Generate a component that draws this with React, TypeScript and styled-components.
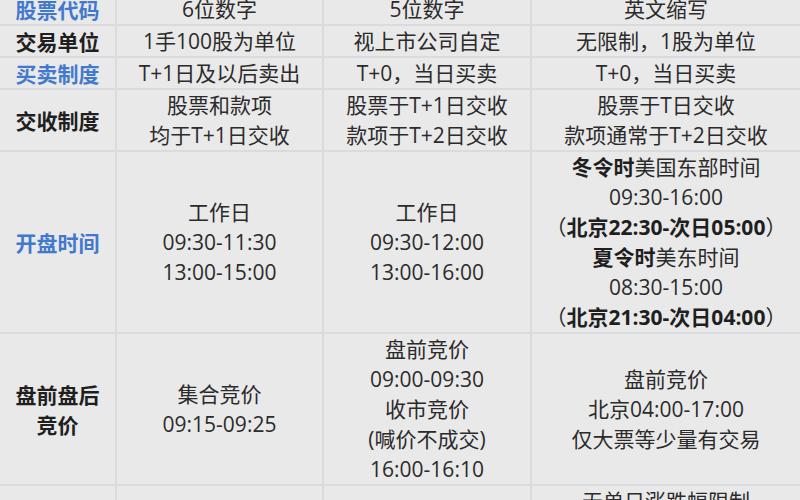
import React from "react";
import styled, { createGlobalStyle } from "styled-components";

const GlobalStyle = createGlobalStyle`
  html, body {
    margin: 0;
    padding: 0;
    background: #e9e9e9;
  }
  * {
    box-sizing: border-box;
  }
`;

const Frame = styled.div`
  width: 800px;
  height: 500px;
  overflow: hidden;
  background: #e9e9e9;
`;

const Table = styled.div`
  margin-top: -6px;
  display: grid;
  grid-template-columns: 115px 205px 206px 1fr;
  gap: 2px;
  background-color: #d9dbdf;
  font-family: "Open Sans", "Noto Sans CJK SC", sans-serif;
  font-size: 21px;
  line-height: 30px;
  color: #2b2b2b;
`;

const Cell = styled.div<{ $top?: boolean }>`
  background-color: #e9e9e9;
  display: flex;
  flex-direction: column;
  align-items: center;
  justify-content: ${(props) => (props.$top ? "flex-start" : "center")};
  text-align: center;
  white-space: nowrap;
`;

const Label = styled(Cell)<{ $blue?: boolean }>`
  font-family: "Noto Sans CJK SC", sans-serif;
  font-weight: 700;
  color: ${(props) => (props.$blue ? "#4279cf" : "#1f1f1f")};
`;

const Strong = styled.b`
  font-weight: 700;
  color: #1f1f1f;
`;

type Row = {
  label: string[];
  blue?: boolean;
  cells: React.ReactNode[][];
  top?: boolean;
};

const rows: Row[] = [
  {
    label: ["股票代码"],
    blue: true,
    cells: [["6位数字"], ["5位数字"], ["英文缩写"]],
  },
  {
    label: ["交易单位"],
    cells: [["1手100股为单位"], ["视上市公司自定"], ["无限制，1股为单位"]],
  },
  {
    label: ["买卖制度"],
    blue: true,
    cells: [["T+1日及以后卖出"], ["T+0，当日买卖"], ["T+0，当日买卖"]],
  },
  {
    label: ["交收制度"],
    cells: [
      ["股票和款项", "均于T+1日交收"],
      ["股票于T+1日交收", "款项于T+2日交收"],
      ["股票于T日交收", "款项通常于T+2日交收"],
    ],
  },
  {
    label: ["开盘时间"],
    blue: true,
    cells: [
      ["工作日", "09:30-11:30", "13:00-15:00"],
      ["工作日", "09:30-12:00", "13:00-16:00"],
      [
        <>
          <Strong>冬令时</Strong>美国东部时间
        </>,
        "09:30-16:00",
        <>
          （<Strong>北京22:30-次日05:00</Strong>）
        </>,
        <>
          <Strong>夏令时</Strong>美东时间
        </>,
        "08:30-15:00",
        <>
          （<Strong>北京21:30-次日04:00</Strong>）
        </>,
      ],
    ],
  },
  {
    label: ["盘前盘后", "竞价"],
    cells: [
      ["集合竞价", "09:15-09:25"],
      ["盘前竞价", "09:00-09:30", "收市竞价", "(喊价不成交)", "16:00-16:10"],
      ["盘前竞价", "北京04:00-17:00", "仅大票等少量有交易"],
    ],
  },
  {
    label: ["涨跌幅限制"],
    top: true,
    cells: [
      ["", "", "主板±10%", ""],
      ["", "", "无涨跌幅限制", ""],
      ["无单日涨跌幅限制", "设有熔断机制", "", ""],
    ],
  },
];

export default function App() {
  return (
    <Frame>
      <GlobalStyle />
      <Table>
        {rows.map((row, i) => (
          <React.Fragment key={i}>
            <Label $blue={row.blue}>
              {row.label.map((line, j) => (
                <span key={j}>{line}</span>
              ))}
            </Label>
            {row.cells.map((lines, c) => (
              <Cell key={c} $top={row.top}>
                {lines.map((line, j) => (
                  <span key={j}>{line === "" ? "\u00a0" : line}</span>
                ))}
              </Cell>
            ))}
          </React.Fragment>
        ))}
      </Table>
    </Frame>
  );
}
